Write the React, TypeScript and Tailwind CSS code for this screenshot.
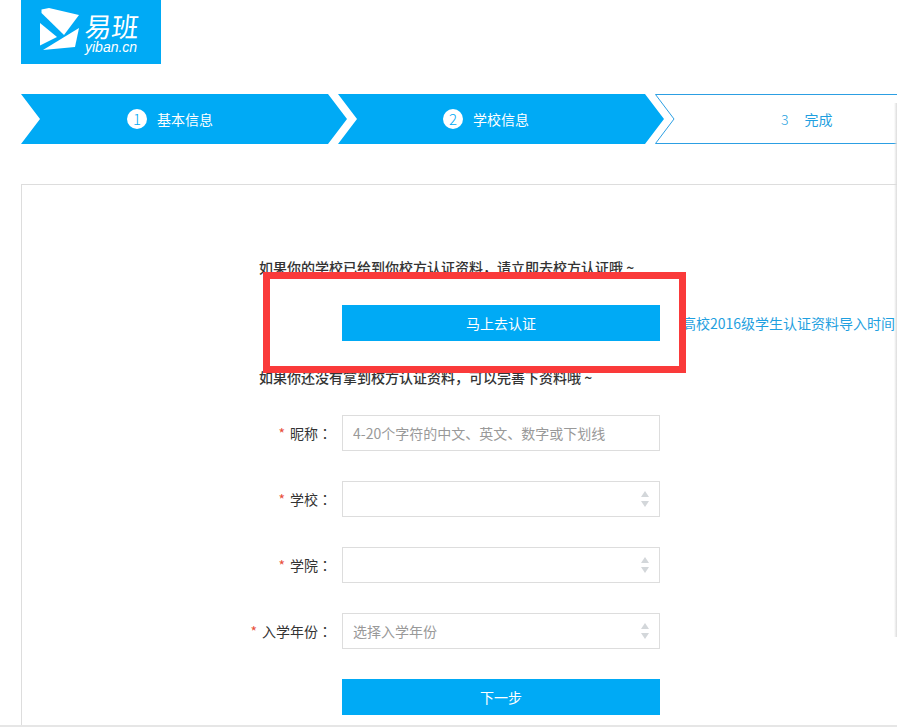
const font = "font-['Noto_Sans_CJK_SC','Liberation_Sans',sans-serif]";

function Logo() {
  return (
    <div className="flex h-16 w-[140px] items-start bg-[#00aaf5] pl-[19px] pt-2 text-white">
      <svg width="41" height="44" viewBox="0 0 41 44" className="shrink-0">
        {/* envelope mark */}
        <path d="M1.5 1.5 L9 0 L39 7 L24 27 L1.5 5 Z" fill="#fff" />
        <path d="M0 15 L17 29 L0 37.5 Z" fill="#fff" />
        <path d="M3 42 L39 20 L35 39 Z" fill="#fff" />
      </svg>
      <div className="ml-[4px] flex flex-col">
        <span className="mt-[4px] inline-block w-[56px] -skew-x-6 text-[27px] font-normal leading-[27px]">易班</span>
        <span className="mt-px font-['Liberation_Sans',sans-serif] text-[14px] italic leading-[14px]">yiban.cn</span>
      </div>
    </div>
  );
}

function Steps() {
  return (
    <div className="mt-[30px] flex h-[50px] text-sm leading-[50px]">
      <div className="flex h-[50px] w-[326px] shrink-0 items-center bg-[#00aaf5] pl-[106px] text-white [clip-path:polygon(0_0,307px_0,326px_25px,307px_50px,0_50px,19px_25px)]">
        <span className="mr-[10px] flex h-5 w-5 items-center justify-center rounded-full bg-white text-[15px] font-light text-[#00aaf5]">1</span>
        基本信息
      </div>
      <div className="-ml-[9px] flex h-[50px] w-[326px] shrink-0 items-center bg-[#00aaf5] pl-[105px] text-white [clip-path:polygon(0_0,307px_0,326px_25px,307px_50px,0_50px,19px_25px)]">
        <span className="mr-[10px] flex h-5 w-5 items-center justify-center rounded-full bg-white text-[15px] font-light text-[#00aaf5]">2</span>
        学校信息
      </div>
      <div className="relative -ml-[9px] flex h-[50px] w-[242px] shrink-0 items-center pl-[126px] text-[#1f9fe0]">
        <svg width="242" height="50" className="absolute left-0 top-0" fill="none" stroke="#2c9fe3">
          <path d="M242 .5 H.5 L19 25 L.5 49.5 H242" />
        </svg>
        <span className="mr-[16px] text-sm font-light">3</span>
        完成
      </div>
    </div>
  );
}

function Arrows() {
  return (
    <svg width="10" height="16" viewBox="0 0 10 16" className="pointer-events-none absolute right-[10px] top-[10px]" fill="#d3d7da">
      <path d="M5 0 L9 6 H1 Z" />
      <path d="M1 10 H9 L5 16 Z" />
    </svg>
  );
}

function Row({ label, children }: { label: string; children: React.ReactNode }) {
  return (
    <div className="mb-[30px] flex items-center text-sm text-[#333]">
      <label className="w-[102px] shrink-0 pr-[10px] text-right">
        <span className="mr-[5px] text-sm text-[#e8503a]">*</span>
        {label}
        <span className="font-['Noto_Sans_CJK_TC',sans-serif]">：</span>
      </label>
      <div className="relative h-9 w-[318px]">{children}</div>
    </div>
  );
}

function SelectBox({ placeholder }: { placeholder?: string }) {
  return (
    <>
      <select className="h-full w-full appearance-none border border-[#ddd] bg-white px-[10px] text-sm text-[#999] outline-none">
        <option>{placeholder ?? ""}</option>
      </select>
      <Arrows />
    </>
  );
}

export default function App() {
  return (
    <div className={`relative h-[727px] w-[897px] overflow-hidden bg-white pl-[21px] ${font}`}>
      <Logo />
      <Steps />

      <div className="mt-10 w-[876px] border-l border-t border-[#ddd] pb-[10px] pl-[218px] pt-[72px]">
        <p className="pl-[19px] text-sm font-medium leading-5 text-[#333]">
          如果你的学校已给到你校方认证资料，请立即去校方认证哦 ~
        </p>

        <div className="ml-[102px] mt-7 flex items-center">
          <button className="h-9 w-[318px] shrink-0 bg-[#00aaf5] text-sm text-white">马上去认证</button>
          <a className="ml-[22px] whitespace-nowrap text-sm text-[#1f9fe0]">高校2016级学生认证资料导入时间</a>
        </div>

        <p className="mb-[28px] mt-[26px] pl-[19px] text-sm font-medium leading-5 text-[#333]">
          如果你还没有拿到校方认证资料，可以完善下资料哦 ~
        </p>

        <Row label="昵称">
          <input
            placeholder="4-20个字符的中文、英文、数字或下划线"
            className="h-full w-full border border-[#ddd] px-[10px] text-sm outline-none placeholder:text-[#999]"
          />
        </Row>
        <Row label="学校">
          <SelectBox />
        </Row>
        <Row label="学院">
          <SelectBox />
        </Row>
        <Row label="入学年份">
          <SelectBox placeholder="选择入学年份" />
        </Row>

        <button className="ml-[102px] block h-9 w-[318px] bg-[#00aaf5] text-sm text-white">下一步</button>
      </div>

      {/* line along the bottom of the window */}
      <div className="-ml-[21px] h-[2px] w-[897px] bg-[#e6e6e6]" />

      {/* faint shadow down the right edge */}
      <div className="pointer-events-none absolute right-0 top-[103px] h-[534px] w-[3px] bg-gradient-to-r from-transparent to-[#dcdcdc]" />

      {/* annotation drawn over the page */}
      <div className="pointer-events-none absolute left-[263px] top-[272px] h-[101px] w-[423px] border-[7px] border-[#fa3a3a]" />
    </div>
  );
}
